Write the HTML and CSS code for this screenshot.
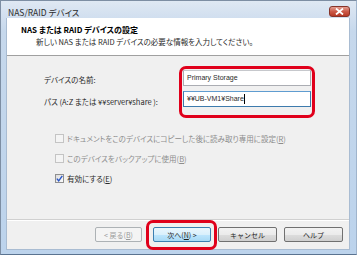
FILE: index.html
```html
<!DOCTYPE html>
<html lang="ja">
<head>
    <meta charset="UTF-8">
    <title>NAS/RAID デバイス</title>
    <link rel="stylesheet" href="styles.css">
</head>
<body>
    <div class="window">
        <div class="titlebar">
            <span class="title">NAS/RAID デバイス</span>
            <span class="close">
                <svg width="9" height="7" viewBox="0 0 9 7"><path d="M1 0.5 L8 6.5 M8 0.5 L1 6.5" stroke="#fff" stroke-width="1.8"/></svg>
            </span>
        </div>
        <div class="client">
            <div class="header">
                <div class="header-title">NAS または RAID デバイスの設定</div>
                <div class="header-sub">新しい NAS または RAID デバイスの必要な情報を入力してください。</div>
            </div>
            <div class="content">
                <div class="fields">
                    <div class="labels">
                        <label>デバイスの名前:</label>
                        <label>パス (A:Z または ¥¥server¥share ):</label>
                    </div>
                    <div class="inputs">
                        <div class="input">Primary Storage</div>
                        <div class="input focused">¥¥UB-VM1¥Share<span class="caret"></span></div>
                    </div>
                </div>
                <div class="options">
                    <div class="option disabled"><span class="check"></span>ドキュメントをこのデバイスにコピーした後に読み取り専用に設定(<u>R</u>)</div>
                    <div class="option disabled"><span class="check"></span>このデバイスをバックアップに使用(<u>B</u>)</div>
                    <div class="option"><span class="check checked"><svg width="7" height="7" viewBox="0 0 7 7"><path d="M0.8 3.6 L2.7 5.8 L6.3 0.8" fill="none" stroke="#2a56c6" stroke-width="1.4"/></svg></span>有効にする(<u>E</u>)</div>
                </div>
            </div>
            <div class="footer">
                <button class="btn back" disabled>&lt; 戻る(<u>B</u>)</button>
                <span class="marked"><button class="btn default">次へ(<u>N</u>) &gt;</button></span>
                <button class="btn">キャンセル</button>
                <button class="btn">ヘルプ</button>
            </div>
        </div>
    </div>
</body>
</html>
```

FILE: styles.css
```css
body {
    margin: 0;
    font-family: "Noto Sans CJK JP", "Liberation Sans", sans-serif;
    font-feature-settings: "palt";
    font-size: 7.5px;
    color: #2a2a2a;
}
.window {
    width: 357px;
    height: 255px;
    box-sizing: border-box;
    border: 1px solid #7d8ea3;
    border-right-color: #9fb4cc;
    border-bottom-color: #5a7390;
    background: linear-gradient(#dfe8f3, #c6d8ec 30px, #bcd3ec);
    display: flex;
    flex-direction: column;
}
.titlebar {
    height: 17px;
    display: flex;
    align-items: center;
    justify-content: space-between;
    padding: 0 6px 0 7px;
}
.title {
    font-size: 8.5px;
    color: #2b2b2b;
    margin-top: 4px;
}
.close {
    width: 19px;
    height: 9px;
    margin-top: 4px;
    border: 1px solid #86342a;
    border-radius: 3px;
    background: linear-gradient(#e4a093, #cc5a48 50%, #b73a26);
    display: flex;
    align-items: center;
    justify-content: center;
}
.client {
    flex: 1;
    margin: 0 6px 4px 5px;
    background: #f0f0f0;
    border: 1px solid #a9bcd2;
    border-top: none;
    display: flex;
    flex-direction: column;
}
.header {
    height: 38px;
    background: #fff;
    border-bottom: 1px solid #a0a0a0;
    padding: 6px 0 0 14px;
    box-sizing: border-box;
}
.header-title {
    font-size: 8px;
    font-weight: bold;
    color: #000;
    line-height: 12px;
}
.header-sub {
    padding-left: 15px;
    line-height: 12px;
}
.content {
    flex: 1;
    padding: 10px 0 0 37px;
}
.fields {
    display: flex;
}
.labels {
    width: 135px;
    display: flex;
    flex-direction: column;
    gap: 6px;
    padding-top: 6px;
}
.labels label {
    line-height: 16px;
}
.inputs {
    width: 128px;
    border: 3px solid #e0001b;
    border-radius: 7px;
    padding: 1px 1px 8px;
    display: flex;
    flex-direction: column;
    gap: 5px;
}
.input {
    height: 16px;
    box-sizing: border-box;
    background: #fff;
    border: 1px solid #abadb3;
    border-top-color: #c6c8cc;
    padding-left: 3px;
    font-family: "Liberation Sans", sans-serif;
    font-size: 7px;
    line-height: 14px;
    display: flex;
    align-items: center;
}
.input.focused {
    border-color: #3d7bad;
    border-top-color: #5f9cd0;
}
.caret {
    width: 1px;
    height: 10px;
    background: #000;
}
.options {
    margin-top: 10px;
    padding-left: 11px;
    display: flex;
    flex-direction: column;
}
.option {
    height: 20px;
    display: flex;
    align-items: center;
}
.option.disabled {
    color: #8d8d8d;
}
.check {
    width: 9px;
    height: 9px;
    box-sizing: border-box;
    border: 1px solid #8f8f8f;
    background: linear-gradient(135deg, #dcdcdc, #fbfbfb);
    margin-right: 3px;
    display: flex;
    align-items: center;
    justify-content: center;
}
.option.disabled .check {
    border-color: #c4c4c4;
    background: #f4f4f4;
}
.footer {
    height: 29px;
    border-top: 1px solid #d0d0d0;
    box-shadow: inset 0 1px 0 #fff;
    display: flex;
    align-items: center;
    justify-content: flex-end;
    gap: 7px;
    padding: 0 6px 0 0;
}
.btn {
    width: 59px;
    height: 15px;
    padding: 0;
    font-family: inherit;
    font-size: 7px;
    color: #1e1e1e;
    border: 1px solid #707070;
    border-radius: 2px;
    background: linear-gradient(#f2f2f2, #ebebeb 50%, #dddddd 51%, #cfcfcf);
}
.btn.back {
    width: 47px;
    margin-right: 4px;
    color: #9a9a9a;
    border-color: #adb2b5;
    background: #f4f4f4;
}
.btn.default {
    width: 58px;
    border-color: #3c7fb1;
    background: linear-gradient(#eaf6fd, #d9f0fc 50%, #bee6fd 51%, #a7d9f5);
}
.marked {
    position: relative;
    display: flex;
}
.marked::after {
    content: "";
    position: absolute;
    left: -7px;
    right: -6px;
    top: -7px;
    bottom: -8px;
    border: 3px solid #e0001b;
    border-radius: 7px;
}
```
